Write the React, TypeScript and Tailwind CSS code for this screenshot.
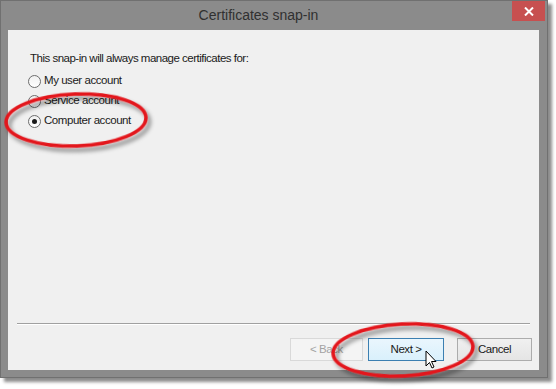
import React from 'react';

const ui = { fontFamily: '"Liberation Sans", Arial, sans-serif' };

function Radio({ label, checked }: { label: string; checked?: boolean }) {
    return (
        <div className="flex items-center h-[20px]">
            <span className="w-[13px] h-[13px] rounded-full border border-[#6d6d6d] bg-gradient-to-b from-[#f0f0f0] to-white flex items-center justify-center ml-[20px]">
                {checked && <span className="w-[5px] h-[5px] rounded-full bg-[#1a1a1a]" />}
            </span>
            <span className="ml-[3px] text-[11.5px] tracking-[-0.45px] text-[#1a1a1a]">{label}</span>
        </div>
    );
}

function Button({ children, kind, w }: { children: React.ReactNode; kind?: 'off' | 'default'; w: string }) {
    const look =
        kind === 'off'
            ? 'border-[#d9d9d9] bg-[#f4f4f4] text-[#a3a3a3]'
            : kind === 'default'
              ? 'border-[#3c7fb1] bg-gradient-to-b from-[#eaf6fd] to-[#d9f0fc] text-[#1a1a1a]'
              : 'border-[#acacac] bg-gradient-to-b from-[#f0f0f0] to-[#e5e5e5] text-[#1a1a1a]';
    return (
        <div className={`${w} h-[23px] border flex items-center justify-center text-[11.5px] tracking-[-0.45px] ${look}`}>
            {children}
        </div>
    );
}

export default function App() {
    return (
        <div className="relative w-[556px] h-[389px] bg-white overflow-hidden" style={ui}>
            <div className="w-[548px] h-[378px] bg-[#8b8b8b] border border-[#707070] shadow-[4px_4px_3px_rgba(0,0,0,0.45)] flex flex-col">
                <div className="h-[29px] flex items-start relative">
                    {/* title is centred in the space left of the close button */}
                    <div className="flex-1 text-center text-[14px] leading-[16px] text-[#303030] pt-[6px] pr-[31px]">
                        Certificates snap-in
                    </div>
                    <div className="absolute right-[2px] top-0 w-[33px] h-[20px] bg-[#c75050] flex items-center justify-center">
                        <svg width="10" height="9" viewBox="0 0 10 9">
                            <path d="M1 0.5 L9 8.5 M9 0.5 L1 8.5" stroke="white" strokeWidth="2" />
                        </svg>
                    </div>
                </div>
                <div className="flex-1 mx-[7px] mb-[7px] mr-[8px] bg-[#f0f0f0] flex flex-col">
                    <div className="pl-[22px] pt-[20px] text-[11.5px] tracking-[-0.5px] text-[#1a1a1a] h-[41px]">
                        This snap-in will always manage certificates for:
                    </div>
                    <Radio label="My user account" />
                    <Radio label="Service account" />
                    <Radio label="Computer account" checked />
                    <div className="flex-1" />
                    <div className="mx-[9px] border-t border-[#a0a0a0] border-b-white border-b" />
                    <div className="flex justify-end items-center pt-[13px] pb-[9px] pr-[7px]">
                        <Button kind="off" w="w-[73px]">&lt; Back</Button>
                        <div className="w-[5px]" />
                        <Button kind="default" w="w-[76px]">Next &gt;</Button>
                        <div className="w-[13px]" />
                        <Button w="w-[75px]">Cancel</Button>
                    </div>
                </div>
            </div>

            <svg className="absolute inset-0 pointer-events-none" width="556" height="389" viewBox="0 0 556 389">
                <defs>
                    <filter id="sh" x="-20%" y="-30%" width="140%" height="170%">
                        <feDropShadow dx="3" dy="4" stdDeviation="2" floodColor="#000" floodOpacity="0.45" />
                    </filter>
                </defs>
                <ellipse cx="76" cy="120" rx="70" ry="26" fill="none" stroke="#e3161b" strokeWidth="3.5" filter="url(#sh)" transform="rotate(-2 76 120)" />
                <ellipse cx="403" cy="350" rx="70" ry="26" fill="none" stroke="#e3161b" strokeWidth="3.5" filter="url(#sh)" transform="rotate(-3 403 350)" />
                <path d="M426 351 L426 366 L429.5 362.5 L432 368 L434 367 L431.5 361.5 L436 361.5 Z" fill="white" stroke="black" strokeWidth="1" strokeLinejoin="round" />
            </svg>
        </div>
    );
}
